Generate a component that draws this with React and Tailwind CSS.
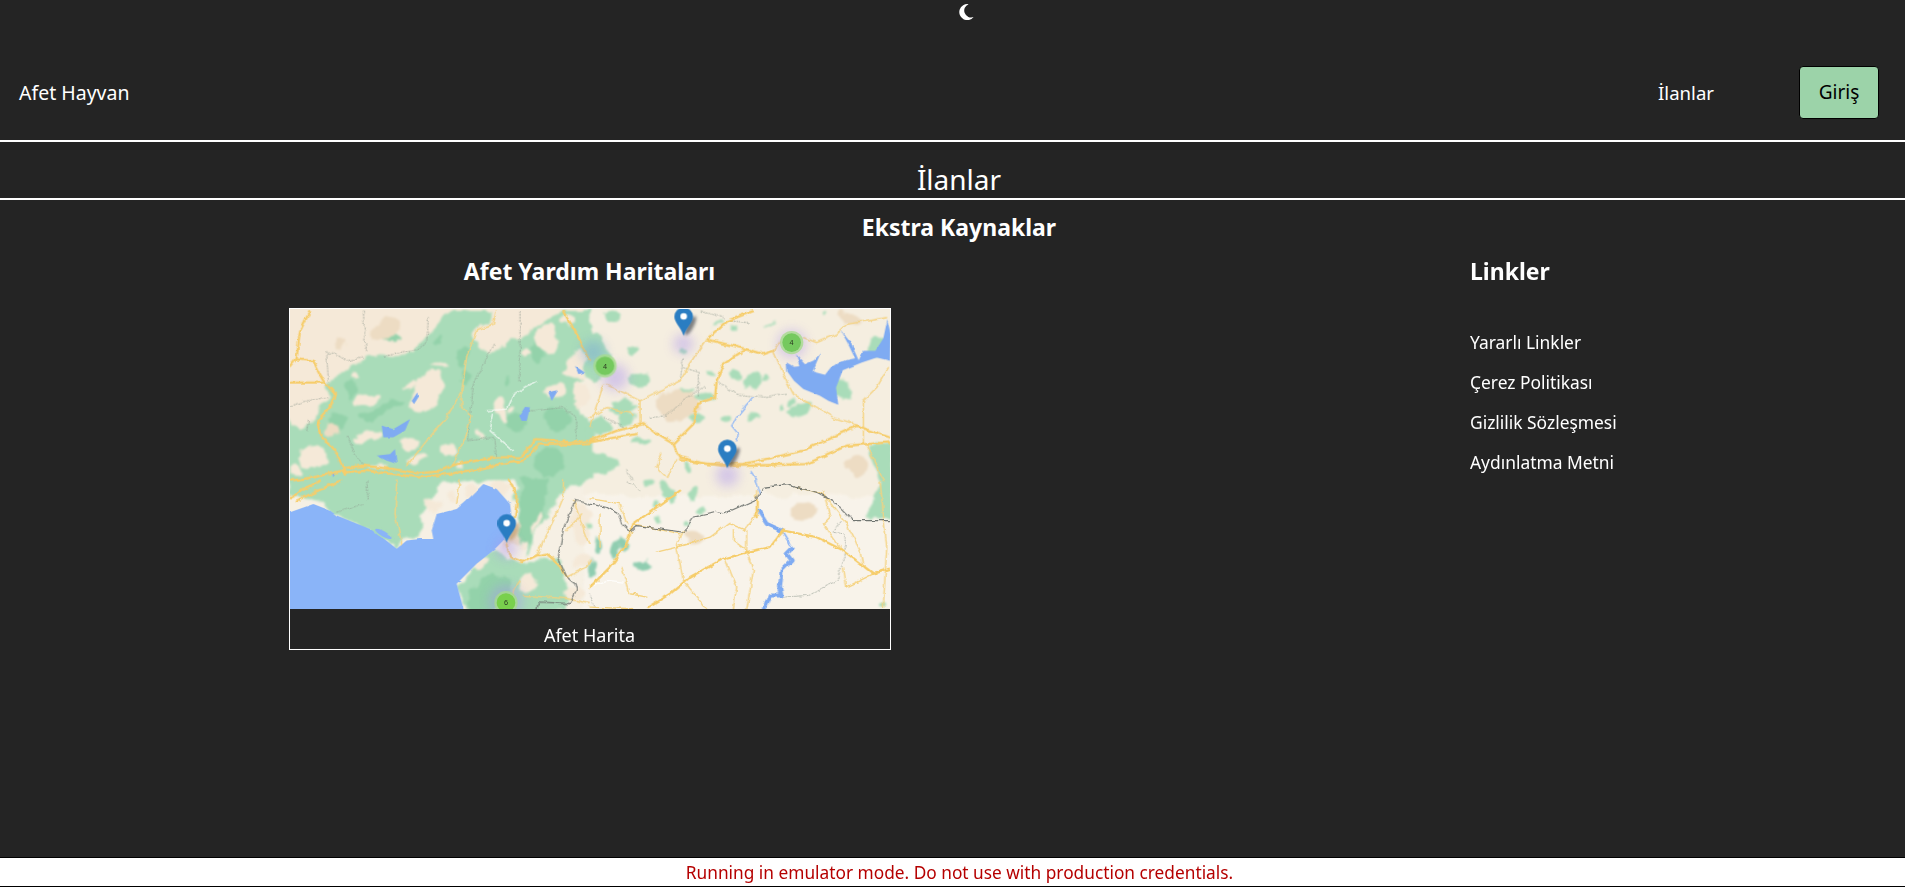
import React from "react";

const Q = [
  { t: "translate(-30,-24)",
    green: ["M140,250 L200,210 250,180 320,160 400,150 430,110 520,30 640,30 630,70 590,110 600,140 640,150 700,120 770,70 850,30 940,30 940,110 870,170 850,210 910,240 900,285 880,300 920,340 940,420 940,545 20,545 20,350 70,390 110,340 150,290 Z"],
    beige: [[440,275,70,42,-50],[260,295,42,16,-15],[665,325,17,42,-15],[738,155,15,13],[800,110,36,44],[385,425,26,18],[505,450,24,16],[830,265,26,18],[700,330,9,8],[260,410,45,14,-15],[100,465,40,34],[50,510,22,22],[600,100,22,20],[905,280,26,36],[860,60,20,14],[600,400,14,8],[540,500,12,12],[410,470,24,12],[300,490,24,8],[390,250,22,12,-30],[480,190,16,8],[230,225,14,8]],
    dark: [[175,358,30,24],[210,265,18,30],[305,330,70,15,-18],[710,370,38,24],[835,355,44,38],[768,155,14,34],[548,170,14,28],[550,225,14,22],[330,108,36,10],[475,120,10,10],[680,235,8,12],[810,490,50,40]],
    tan: [[315,85,48,26,-20],[182,128,14,18],[158,390,20,20]],
    lake: ["M305,375 L340,385 390,355 375,390 340,410 310,410 Z","M290,465 L330,460 345,445 350,490 320,480 Z","M718,345 L735,318 750,320 740,360 725,360 Z","M395,300 L412,275 415,290 402,310 Z","M885,195 L915,215 895,220 Z","M805,275 L835,268 815,300 Z","M155,515 L165,520 160,530Z"],
    road: ["M90,30 L60,90 50,170 30,195","M50,175 L100,180 120,220 135,245 L165,280 150,320 115,360 125,410 160,440 190,500 195,525","M30,245 L135,245","M190,502 L250,495 340,505 400,515 480,510 530,490 650,470 720,470 770,415 880,425 930,420","M190,515 L260,510 340,520 420,530 500,520 600,505 660,490 730,480 780,428 880,432 930,430","M30,540 L100,530 190,510","M850,30 L890,100 930,180"],
    thin: ["M648,30 L640,70 590,85 560,170 545,270 500,350 440,420 380,495","M545,270 L545,320 575,345 560,400 520,490"],
    dash: ["M250,30 L255,120 260,150 M145,160 L160,155 200,180 250,170 M30,315 L100,295 145,290 M315,165 L400,150 440,125 445,50 M205,410 L225,460 250,490 M720,30 L720,240 M640,130 L580,250 565,420 640,410 650,470 M755,330 L850,320 890,350 890,420 M85,360 L80,390 M140,155 L145,240"],
    white: ["M620,330 L680,325 700,280 770,240 M640,340 L630,390 700,450"],
    border: [], river: [] },
  { t: "translate(900,-24)",
    green: ["M-20,90 L30,100 50,150 70,200 40,240 -20,230 Z","M60,300 L110,295 145,320 90,345 50,330Z","M-20,380 L35,340 60,380 30,400 -20,410Z"],
    greenE: [[130,150,18,12],[70,45,28,12],[150,240,34,22,-30],[110,355,28,20],[150,425,34,10],[20,490,64,34],[285,265,20,8],[345,288,34,11],[435,225,24,9],[490,235,24,22],[525,235,8,10],[410,350,12,10],[490,350,14,6,-30],[315,355,18,10],[630,325,40,16,-20],[605,305,9,9],[580,315,6,10],[762,268,24,26],[865,135,28,28],[385,65,15,6],[540,70,12,4],[700,40,6,8],[285,150,11,11,-45],[430,80,10,8],[360,218,9,7],[300,510,9,20]],
    greenP: ["M835,425 L910,425 910,545 870,545 Z"],
    tan: [[800,495,28,34],[260,310,65,50],[780,50,32,20]],
    lake: ["M590,185 L612,198 628,196 618,160 645,190 672,178 692,156 668,212 705,222 722,200 750,182 795,172 772,125 750,85 782,125 806,178 820,150 856,150 880,112 892,55 902,100 900,180 860,170 815,185 758,208 738,260 745,312 715,300 690,285 640,265 612,240 592,212Z"],
    road: ["M0,420 L80,390 160,370 200,400 250,430 270,470 350,490 460,490 640,450 800,375 900,410","M270,478 L400,495 480,495 650,490 770,435 900,425","M250,430 L310,370 320,310 375,290 380,240 400,190 470,145 L350,115 L410,60 L490,30","M470,145 L520,160 550,150","M0,425 L80,410 140,400"],
    thin: ["M550,150 L590,240 610,280 730,350 810,375","M640,110 L680,125 740,100 770,70 890,50","M40,250 L0,380","M50,250 L150,300 150,370","M150,300 L190,280 270,240 300,190 350,115","M820,300 L820,430","M820,300 L860,260 895,200","M830,430 L880,540","M0,350 L50,320 130,340","M200,500 L230,530 260,480 M200,500 L215,460","M550,150 L570,120"],
    dash: ["M270,240 L280,170 M280,200 L325,215 325,290 M180,350 L230,345 280,300 345,255 M380,240 L440,280 530,290 590,280 M420,60 L480,65 M40,350 L100,380 M330,30 L400,50 M110,510 L130,540"],
    border: [], river: ["M490,290 L440,350 425,375 445,400 440,420 M480,510 L500,540"] },
  { t: "translate(-30,516)",
    green: ["M20,40 L20,-5 490,-5 470,40 440,70 420,110 430,140 410,170 350,195 300,160 230,130 160,95 110,70 Z","M590,250 L650,210 690,230 720,250 780,230 840,240 860,300 860,395 560,395 530,320 Z","M740,230 L790,120 850,30 870,-5 700,-5 700,60 740,100 Z"],
    darkP: ["M720,-5 L810,-5 790,110 750,190 710,200 715,100Z","M560,340 L640,270 690,310 680,395 570,395Z"],
    beige: [[455,75,22,26,-40],[745,310,22,22],[605,250,26,11,-20],[725,195,14,13],[660,25,22,20],[905,130,30,60],[905,240,30,20],[880,340,30,20],[575,35,26,18],[510,50,18,14],[770,130,9,40,20]],
    tan: [[695,170,20,22]],
    lakeE: [[310,160,35,12,30]],
    road: ["M30,50 L120,0","M50,60 L180,0","M690,0 L712,50 705,110","M680,190 L690,230 730,245 770,225 800,220 840,255 860,290"],
    thin: ["M350,0 L345,100 365,190","M720,300 L700,330 695,387","M770,225 L790,180 830,100 850,50 850,0","M730,345 L860,355 930,370","M860,290 L920,260 930,240","M880,60 L920,170 930,190","M540,0 L530,70","M860,150 L905,100"],
    dash: ["M260,0 L265,60 M170,95 L250,70"],
    white: [],
    border: ["M885,60 L850,145 835,230 860,290 885,310 890,330 870,370 775,365 770,387","M885,60 L930,70"], river: [] },
  { t: "translate(900,516)",
    green: ["M830,115 L850,30 880,-5 910,-5 910,115 Z"],
    greenE: [[190,70,9,14],[240,45,18,18],[305,40,15,17],[335,95,15,14],[210,115,7,7],[290,125,9,7],[5,140,9,7],[180,15,11,9],[225,20,14,14],[880,375,16,10]],
    tealE: [[25,195,11,28],[80,220,14,30],[100,190,14,18],[160,255,28,16],[5,265,14,30]],
    tan: [[310,170,24,16],[640,90,38,28]],
    road: ["M175,380 L240,340 300,290 400,235 470,215 540,200 580,150","M580,150 L680,170 760,210 850,280 900,265","M0,320 L60,260 110,190 130,130 270,30 M500,60 L500,110"],
    thin: ["M0,55 L40,60 90,70 110,130","M130,130 L270,160","M200,215 L260,200 360,170 420,125","M280,150 L260,200 280,300 350,387","M420,130 L470,150 470,215 490,270 470,387","M405,235 L440,320 430,387","M430,150 L430,180 470,210","M700,30 L720,110 700,130 750,200","M850,280 L770,320 760,260","M870,0 L890,200 880,380","M500,30 L500,100 460,150","M620,20 L700,40 770,130 810,210 820,260","M95,260 L120,340 170,350","M30,100 L30,200 M260,200 L320,185 M0,380 L130,385"],
    dash: ["M580,350 L660,345 740,300 765,230 765,160 730,155 755,120 M110,0 L150,30 M0,340 L15,380"],
    white: ["M0,320 L50,300 100,305"],
    border: ["M0,70 L50,80 85,100 95,130 120,155 140,135 280,155 310,110 380,95 400,100 500,55 520,20 590,12 680,35 730,60 790,120 900,120"],
    river: ["M495,0 L510,40"],
    riverW: ["M505,90 L530,130 575,150", "M605,205 L590,220 605,240 575,270 570,320 575,345 540,345 520,387"],
    riverT: ["M575,150 L605,200"] },
];

const Ells = ({ list, fill, op }) => (list || []).map(([x, y, rx, ry, r], i) => (
  <ellipse key={i} cx={x} cy={y} rx={rx} ry={ry} fill={fill} opacity={op} transform={r ? `rotate(${r} ${x} ${y})` : undefined} />
));
const Paths = ({ list, ...p }) => (list || []).map((d, i) => <path key={i} d={d} {...p} />);

function Pin({ x, tip }) {
  const b = tip - 58;
  return (
    <g>
      <path d={`M${x},${tip} C${x - 8},${tip - 25} ${x - 28},${tip - 40} ${x - 28},${b} A28,28 0 1 1 ${x + 28},${b} C${x + 28},${tip - 40} ${x + 8},${tip - 25} ${x},${tip} Z`} fill="#2a7dc2" />
      <circle cx={x} cy={b - 1} r="10" fill="#fff" />
    </g>
  );
}
function Cluster({ x, y, n, fill = "#74c95f" }) {
  return (
    <g>
      <circle cx={x} cy={y} r="35" fill="#a6dc8c" opacity="0.8" filter="url(#edge)" />
      <circle cx={x} cy={y} r="28" fill={fill} filter="url(#edge)" />
      <text x={x} y={y + 8} textAnchor="middle" fontSize="22" fontFamily="'Liberation Sans', sans-serif" fill="#2c3a22">{n}</text>
    </g>
  );
}

function MapPicture() {
  return (
    <svg viewBox="0 0 1800 902" preserveAspectRatio="none" className="block w-[600px] h-[300px]">
      <defs>
        <filter id="area" colorInterpolationFilters="sRGB" filterUnits="userSpaceOnUse" x="-60" y="-60" width="1920" height="1020">
          <feTurbulence type="fractalNoise" baseFrequency="0.018" numOctaves="4" seed="7" result="n" />
          <feDisplacementMap in="SourceGraphic" in2="n" scale="44" xChannelSelector="R" yChannelSelector="G" />
          <feGaussianBlur stdDeviation="3.5" />
        </filter>
        <filter id="coast" colorInterpolationFilters="sRGB" filterUnits="userSpaceOnUse" x="-60" y="-60" width="1920" height="1020">
          <feTurbulence type="fractalNoise" baseFrequency="0.03" numOctaves="3" seed="3" result="n" />
          <feDisplacementMap in="SourceGraphic" in2="n" scale="7" xChannelSelector="R" yChannelSelector="G" />
          <feGaussianBlur stdDeviation="1.4" />
        </filter>
        <filter id="line" colorInterpolationFilters="sRGB" filterUnits="userSpaceOnUse" x="-60" y="-60" width="1920" height="1020">
          <feTurbulence type="fractalNoise" baseFrequency="0.04" numOctaves="3" seed="11" result="n" />
          <feDisplacementMap in="SourceGraphic" in2="n" scale="14" xChannelSelector="R" yChannelSelector="G" />
          <feGaussianBlur stdDeviation="1.1" />
        </filter>
        <filter id="edge" x="-20%" y="-20%" width="140%" height="140%"><feGaussianBlur stdDeviation="2" /></filter>
        <filter id="halo" x="-60%" y="-60%" width="220%" height="220%"><feGaussianBlur stdDeviation="16" /></filter>
        <filter id="shadow" x="-60%" y="-60%" width="220%" height="220%"><feGaussianBlur stdDeviation="5" /></filter>
      </defs>
      <rect x="0" y="0" width="1800" height="902" fill="#f6f0e4" />
      <g filter="url(#area)">
        <rect x="-60" y="-60" width="940" height="480" fill="#f5e9d8" />
        <rect x="880" y="-60" width="980" height="620" fill="#f5eee0" />
        <rect x="880" y="560" width="980" height="400" fill="#f8f3ea" />
        {Q.map((q, i) => (
          <g key={i} transform={q.t}>
            <Paths list={q.green} fill="#a9dcb9" />
            <Paths list={q.greenP} fill="#a9dcb9" />
            <Ells list={q.greenE} fill="#a9dcb9" />
            <Paths list={q.darkP} fill="#93d2aa" />
            <Ells list={q.dark} fill="#93d2aa" />
            <Ells list={q.tealE} fill="#8fcdb0" />
            <Ells list={q.beige} fill="#f5e9d8" />
            <Ells list={q.tan} fill="#eddcc3" />
          </g>
        ))}
      </g>
      <g filter="url(#coast)">
        <g transform="translate(-30,516)">
          <path d="M-20,95 L30,95 100,70 150,90 170,105 220,125 270,145 300,165 350,205 380,180 420,175 460,175 455,150 470,100 530,85 570,50 610,10 650,25 690,70 695,110 670,180 640,210 590,250 530,310 560,420 -20,420 Z" fill="#8ab4f8" />
          <Ells list={Q[2].lakeE} fill="#a9dcb9" />
          <ellipse cx="310" cy="160" rx="28" ry="8" fill="#8ab4f8" transform="rotate(30 310 160)" />
        </g>
        {Q.map((q, i) => (
          <g key={i} transform={q.t}><Paths list={q.lake} fill="#7fabf2" /></g>
        ))}
      </g>
      <g filter="url(#line)">
        {Q.map((q, i) => (
          <g key={i} transform={q.t} fill="none" strokeLinejoin="round" strokeLinecap="round">
            <Paths list={q.river} stroke="#8ab4f8" strokeWidth="4" />
            <Paths list={q.riverW} stroke="#7fabf2" strokeWidth="12" />
            <Paths list={q.riverT} stroke="#8ab4f8" strokeWidth="5" />
            <Paths list={q.white} stroke="#ffffff" strokeWidth="4" opacity="0.8" />
            <Paths list={q.dash} stroke="#8f9a90" strokeWidth="2" strokeDasharray="4 5" />
            <Paths list={q.thin} stroke="#f5d27e" strokeWidth="4" />
            <Paths list={q.road} stroke="#f6cd6b" strokeWidth="7" />
            <Paths list={q.border} stroke="#6f7470" strokeWidth="3.5" />
          </g>
        ))}
      </g>
      <g filter="url(#halo)" fill="#a892f0" opacity="0.42">
        <circle cx="1180" cy="105" r="30" />
        <circle cx="975" cy="205" r="40" />
        <circle cx="1505" cy="105" r="42" />
        <circle cx="1312" cy="500" r="34" />
        <circle cx="650" cy="720" r="32" />
        <circle cx="648" cy="880" r="50" />
      </g>
      <circle cx="910" cy="130" r="36" fill="#6d9fdc" opacity="0.4" filter="url(#halo)" />
      <g filter="url(#shadow)" fill="#2f3540" opacity="0.6">
        <ellipse cx="1201" cy="50" rx="10" ry="32" transform="rotate(28 1201 50)" />
        <ellipse cx="1332" cy="445" rx="10" ry="32" transform="rotate(28 1332 445)" />
        <ellipse cx="672" cy="670" rx="11" ry="30" transform="rotate(28 672 670)" fill="#b8925f" />
      </g>
      <Pin x={1181} tip={81} />
      <Pin x={1312} tip={479} />
      <Pin x={650} tip={703} />
      <Cluster x={945} y={171} n="4" />
      <Cluster x={1505} y={101} n="4" />
      <Cluster x={648} y={883} n="6" fill="#79d04e" />
    </svg>
  );
}

export default function App() {
  return (
    <div className="min-h-screen h-[887px] flex flex-col bg-[#242424] text-white font-['Noto_Sans',sans-serif] overflow-hidden">
      <div className="h-[45px] flex justify-center pt-1 pl-[29px]">
        <svg viewBox="0 0 16 16" className="w-4 h-4" fill="#ffffff">
          <path d="M9.6 0.2 A8 8 0 1 0 14.6 13 A6.6 6.6 0 0 1 9.6 0.2 Z" />
        </svg>
      </div>
      <nav className="h-[97px] shrink-0 flex items-center border-b-2 border-white pl-[19px] pr-[26px]">
        <a className="text-[19.5px]">Afet Hayvan</a>
        <a className="ml-auto mr-[85px] text-[18.6px]">İlanlar</a>
        <button className="w-[80px] h-[53px] rounded-[4px] border border-black bg-[#9cd3a9] text-black text-[19px]">Giriş</button>
      </nav>
      <div className="h-[58px] shrink-0 flex items-end justify-center border-b-2 border-white pl-[13px] pb-[2px]">
        <h1 className="text-[28px] leading-[34px]">İlanlar</h1>
      </div>
      <h2 className="mt-[11px] pl-[13px] text-center text-[23px] leading-[32px] font-bold">Ekstra Kaynaklar</h2>
      <div className="flex mt-[12px]">
        <section className="w-[1179px] flex flex-col items-center">
          <h3 className="text-[23px] leading-[32px] font-bold">Afet Yardım Haritaları</h3>
          <div className="mt-[21px] w-[602px] border border-white">
            <MapPicture />
            <div className="h-[40px] flex items-end justify-center text-[18px] leading-[26px] pb-[1px]">Afet Harita</div>
          </div>
        </section>
        <aside className="ml-[291px]">
          <h3 className="text-[23px] leading-[32px] font-bold">Linkler</h3>
          <ul className="mt-[42px] flex flex-col gap-[14px] text-[17.4px] leading-[26px]">
            <li>Yararlı Linkler</li>
            <li>Çerez Politikası</li>
            <li>Gizlilik Sözleşmesi</li>
            <li>Aydınlatma Metni</li>
          </ul>
        </aside>
      </div>
      <p className="mt-auto h-[30px] shrink-0 bg-white border-y border-black pl-[14px] text-[#b50000] text-center text-[17.3px] leading-[30px]">Running in emulator mode. Do not use with production credentials.</p>
    </div>
  );
}
